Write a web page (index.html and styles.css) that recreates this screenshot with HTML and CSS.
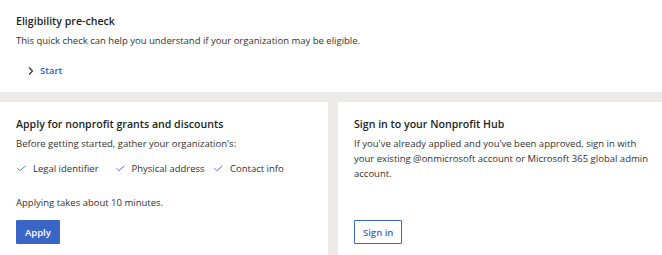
FILE: index.html
```html
<!DOCTYPE html>
<html lang="en">
<head>
<meta charset="utf-8">
<title>Nonprofit eligibility</title>
<link rel="stylesheet" href="styles.css">
</head>
<body>
<section class="precheck">
  <h2 class="title">Eligibility pre-check</h2>
  <p class="text">This quick check can help you understand if your organization may be eligible.</p>
  <a class="start" href="#">
    <svg class="chev" width="6" height="8" viewBox="0 0 6 8"><path d="M1 0.5 L4.5 4 L1 7.5" fill="none" stroke="#323130" stroke-width="1.2"/></svg>
    <span>Start</span>
  </a>
</section>
<div class="cards">
  <section class="card">
    <h2 class="title">Apply for nonprofit grants and discounts</h2>
    <p class="text sub">Before getting started, gather your organization's:</p>
    <ul class="checks">
      <li><svg class="check" width="10" height="7" viewBox="0 0 10 7"><path d="M0.5 3.2 L3.3 6 L9.5 0.5" fill="none" stroke="#3966c6" stroke-width="1"/></svg>Legal identifier</li>
      <li><svg class="check" width="10" height="7" viewBox="0 0 10 7"><path d="M0.5 3.2 L3.3 6 L9.5 0.5" fill="none" stroke="#3966c6" stroke-width="1"/></svg>Physical address</li>
      <li><svg class="check" width="10" height="7" viewBox="0 0 10 7"><path d="M0.5 3.2 L3.3 6 L9.5 0.5" fill="none" stroke="#3966c6" stroke-width="1"/></svg>Contact info</li>
    </ul>
    <p class="text time">Applying takes about 10 minutes.</p>
    <div class="actions"><button class="btn primary">Apply</button></div>
  </section>
  <section class="card card-right">
    <h2 class="title">Sign in to your Nonprofit Hub</h2>
    <p class="text sub">If you've already applied and you've been approved, sign in with your existing @onmicrosoft account or Microsoft 365 global admin account.</p>
    <div class="actions"><button class="btn secondary">Sign in</button></div>
  </section>
</div>
</body>
</html>
```
FILE: styles.css
```css
* { box-sizing: border-box; }
html, body { margin: 0; padding: 0; background: #fff; }
body {
  font-family: "Open Sans", "Noto Sans", sans-serif;
  font-size: 9.5px;
  line-height: 15px;
  color: #323130;
  width: 662px;
  height: 255px;
  overflow: hidden;
}
.title {
  margin: 0;
  font-size: 10.6px;
  line-height: 16px;
  font-weight: 600;
  color: #201f1e;
}
.text { margin: 0; }
.precheck { padding: 13px 16px 0; height: 92px; }
.precheck .text { margin-top: 4px; }
.start {
  display: inline-flex;
  align-items: center;
  gap: 6px;
  margin-top: 15px;
  margin-left: 12px;
  color: #2f5fc4;
  text-decoration: none;
  font-weight: 600;
}
.cards {
  background: #edebe9;
  padding-top: 10px;
  display: grid;
  grid-template-columns: 328px 1fr;
  gap: 10px;
  height: 163px;
}
.card {
  background: #fff;
  padding: 14px 16px 11px;
  display: flex;
  flex-direction: column;
}
.card-right { padding-right: 8px; }
.sub { margin-top: 4px; }
.checks {
  list-style: none;
  margin: 10px 0 0;
  padding: 0;
  display: grid;
  grid-template-columns: repeat(3, 98.5px);
}
.checks li { display: flex; align-items: center; gap: 7px; white-space: nowrap; }
.check { margin-left: 1px; width: 9px; height: 7px; }
.time { margin-top: 19px; }
.actions { margin-top: auto; }
.btn {
  font-family: inherit;
  font-size: 9.5px;
  font-weight: 600;
  height: 24px;
  padding: 0 8px;
  border-radius: 1px;
  cursor: pointer;
}
.primary { background: #3966c6; color: #fff; border: 1px solid #3966c6; }
.secondary { background: #fff; color: #3966c6; border: 1px solid #3966c6; }
```
